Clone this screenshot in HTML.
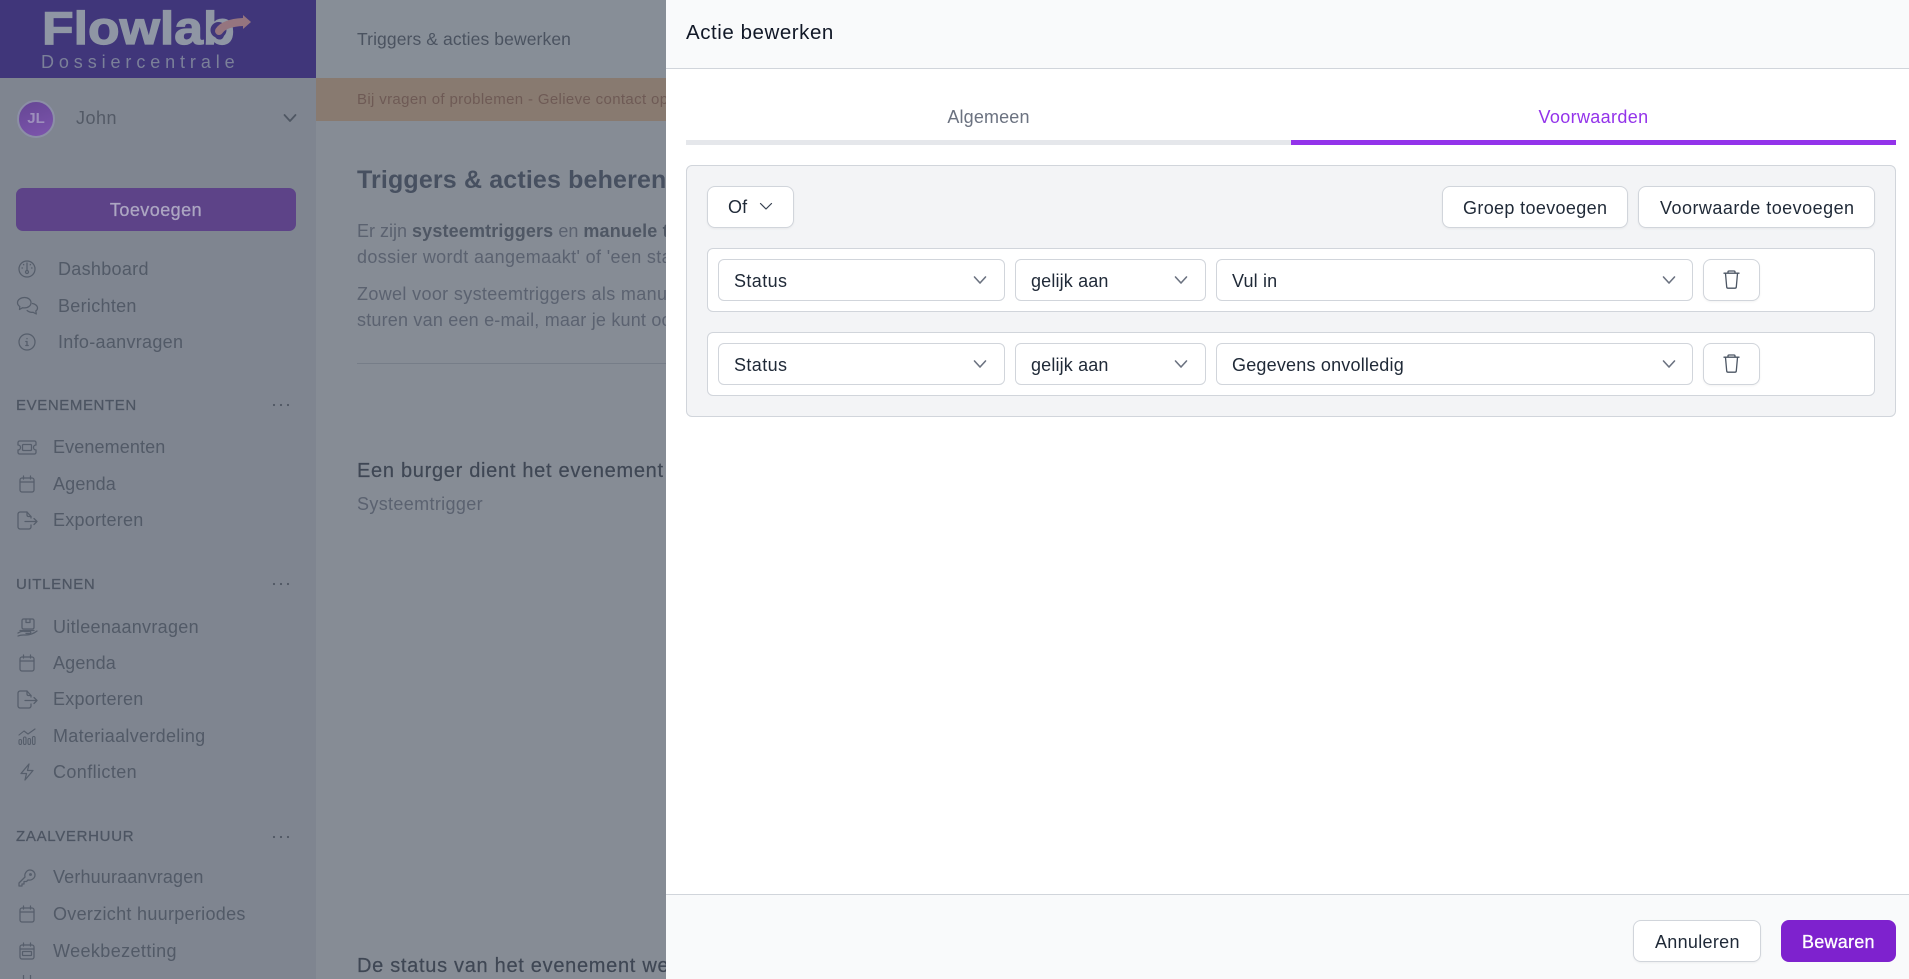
<!DOCTYPE html>
<html lang="nl">
<head>
<meta charset="utf-8">
<title>Actie bewerken</title>
<style>
*{box-sizing:border-box;margin:0;padding:0}
html,body{width:1909px;height:979px;overflow:hidden;background:#868c95;font-family:"Liberation Sans",sans-serif}
.a{position:absolute}
.t{position:absolute;line-height:24px;height:24px;white-space:nowrap;font-size:18px}
.nav{color:#525a67;letter-spacing:.3px}
.sec{color:#4d5562;font-size:15px;letter-spacing:.6px;-webkit-text-stroke:.25px #4d5562}
.ic{position:absolute;fill:none;stroke:#565e6b;stroke-width:1.25;stroke-linecap:round;stroke-linejoin:round}
.dots{position:absolute;width:18px;height:4px;left:272px}
.box{position:absolute;background:#fff;border:1px solid #d1d5db;border-radius:6px}
.btn{position:absolute;background:#fff;border:1px solid #d1d5db;border-radius:8px;box-shadow:0 1px 2px rgba(0,0,0,.05)}
.d{color:#1f2937;letter-spacing:.15px}
.chev{position:absolute;fill:none;stroke:#6b7280;stroke-width:1.6;stroke-linecap:round;stroke-linejoin:round}
.tr{position:absolute;fill:none;stroke:#4b5563;stroke-width:1.3;stroke-linecap:round;stroke-linejoin:round}
.p{font-size:18px;color:#5b6270}
.h{font-size:20px;color:#3f4754;letter-spacing:.7px;-webkit-text-stroke:.2px #3f4754}
</style>
</head>
<body>
<!-- dimmed page -->
<div class="a" style="left:0;top:0;width:316px;height:979px;background:#7f8590"></div>
<div class="a" style="left:316px;top:0;width:350px;height:78px;background:#878e97"></div>
<div class="a" style="left:316px;top:78px;width:350px;height:43px;background:#887a70"></div>
<div class="a" style="left:0;top:0;width:316px;height:78px;background:#40367a"></div>

<!-- logo -->
<div class="t" style="left:42px;top:3px;height:50px;line-height:50px;font-size:46px;font-weight:bold;color:#8f96a4;-webkit-text-stroke:1.2px #8f96a4;transform:scaleX(1.125);transform-origin:left center">Flowlab</div>
<div class="t" style="left:41px;top:50px;font-size:18px;color:#7b8099;letter-spacing:4.9px">Dossiercentrale</div>
<svg class="a" style="left:210px;top:10px" width="46" height="30" viewBox="0 0 46 30"><circle cx="8.500" cy="20" r="8" fill="#40367a"/><path d="M9 21C13 15 22 12.500 33 12" fill="none" stroke="#95757f" stroke-width="8" stroke-linecap="round"/><path d="M33 5L41 12L33 19Z" fill="#95757f"/></svg>

<!-- user -->
<div class="a" style="left:17px;top:100px;width:38px;height:38px;border-radius:50%;background:linear-gradient(160deg,#654694,#7d55ad);border:2px solid #8c8fa6"></div>
<div class="t" style="left:17px;top:107px;width:38px;text-align:center;font-size:15px;font-weight:bold;color:#9d8fbc">JL</div>
<div class="t" style="left:76px;top:106px;color:#535a66;letter-spacing:.5px">John</div>
<svg class="chev" style="left:282px;top:111px;stroke:#4f5763;stroke-width:1.8" width="16" height="14" viewBox="0 0 16 14"><path d="M2.500 4l5.500 6 5.500-6"/></svg>

<!-- add button -->
<div class="a" style="left:16px;top:188px;width:280px;height:43px;background:#5d4388;border-radius:7px"></div>
<div class="t" style="left:16px;top:198px;width:280px;text-align:center;color:#aca6c2;letter-spacing:.45px;-webkit-text-stroke:.3px #aca6c2">Toevoegen</div>

<!-- top nav -->
<svg class="ic" style="left:18px;top:260px" width="18" height="18" viewBox="0 0 18 18"><circle cx="9" cy="9" r="8"/><path d="M9 3v7"/><circle cx="9" cy="12" r="1.500"/><path d="M4 8h.5M13.500 8h.5M5.500 4.500l.3.3M12.500 4.500l-.3.3"/></svg>
<div class="t nav" style="left:58px;top:257px">Dashboard</div>
<svg class="ic" style="left:16px;top:296px" width="23" height="20" viewBox="0 0 23 20"><path d="M8.500 1.500c3.700 0 6.500 2.300 6.500 5.200s-2.800 5.200-6.500 5.200c-.7 0-1.300-.1-1.900-.2L3.500 13.500l.3-3C2.300 9.500 1.500 8.200 1.500 6.700c0-2.900 3.200-5.200 7-5.200z"/><path d="M16.500 7.500c2.800.5 5 2.300 5 4.500 0 1.200-.7 2.300-1.700 3l.5 3-3.200-1.700c-2.300.3-4.500-.5-6-1.800"/></svg>
<div class="t nav" style="left:58px;top:294px">Berichten</div>
<svg class="ic" style="left:18px;top:333px" width="18" height="18" viewBox="0 0 18 18"><circle cx="9" cy="9" r="8"/><path d="M9 8.500v4M9 5.500v.2M7.800 8.500H9M7.800 12.500h2.400"/></svg>
<div class="t nav" style="left:58px;top:330px">Info-aanvragen</div>

<!-- evenementen -->
<div class="t sec" style="left:16px;top:394px">EVENEMENTEN</div>
<svg class="dots" style="top:403px" viewBox="0 0 18 4"><circle cx="2" cy="2" r="1.100" fill="#4f5763"/><circle cx="9" cy="2" r="1.100" fill="#4f5763"/><circle cx="16" cy="2" r="1.100" fill="#4f5763"/></svg>
<svg class="ic" style="left:17px;top:440px" width="20" height="15" viewBox="0 0 20 15"><path d="M2.500 1h15c.8 0 1.500.7 1.500 1.500V5c-1.500 0-2.500 1.100-2.500 2.500S17.500 10 19 10v2.500c0 .8-.7 1.500-1.500 1.500h-15c-.8 0-1.500-.7-1.500-1.500V10c1.500 0 2.500-1.100 2.500-2.500S2.500 5 1 5V2.500C1 1.700 1.700 1 2.500 1z"/><rect x="5.500" y="4.500" width="9" height="6" rx="1"/></svg>
<div class="t nav" style="left:53px;top:435px;letter-spacing:.12px">Evenementen</div>
<svg class="ic" style="left:19px;top:475px" width="16" height="18" viewBox="0 0 16 18"><rect x="1" y="3" width="14" height="14" rx="2"/><path d="M1 7h14M4.500 1v3M11.500 1v3"/></svg>
<div class="t nav" style="left:53px;top:472px;letter-spacing:.15px">Agenda</div>
<svg class="ic" style="left:17px;top:511px" width="21" height="19" viewBox="0 0 21 19"><path d="M14 7V5.500L10 1H3C2 1 1 2 1 3v13c0 1 1 2 2 2h9c1 0 2-1 2-2v-2"/><path d="M10 1v3c0 1 .5 1.500 1.500 1.500H14M8 10.500h12M17 7.500l3 3-3 3"/></svg>
<div class="t nav" style="left:53px;top:508px;letter-spacing:.25px">Exporteren</div>

<!-- uitlenen -->
<div class="t sec" style="left:16px;top:573px;letter-spacing:.65px">UITLENEN</div>
<svg class="dots" style="top:582px" viewBox="0 0 18 4"><circle cx="2" cy="2" r="1.100" fill="#4f5763"/><circle cx="9" cy="2" r="1.100" fill="#4f5763"/><circle cx="16" cy="2" r="1.100" fill="#4f5763"/></svg>
<svg class="ic" style="left:17px;top:618px" width="21" height="19" viewBox="0 0 21 19"><rect x="5" y="1" width="12" height="10" rx="1.500"/><path d="M9 1v3.500h4V1M3 12.500h14M1 15c3-2 5-2 7-1.500h5c1 0 1 2 0 2H9M1 18c3-1.500 5-1 8-1 4 0 7-1 11-4"/></svg>
<div class="t nav" style="left:53px;top:615px">Uitleenaanvragen</div>
<svg class="ic" style="left:19px;top:654px" width="16" height="18" viewBox="0 0 16 18"><rect x="1" y="3" width="14" height="14" rx="2"/><path d="M1 7h14M4.500 1v3M11.500 1v3"/></svg>
<div class="t nav" style="left:53px;top:651px;letter-spacing:.15px">Agenda</div>
<svg class="ic" style="left:17px;top:690px" width="21" height="19" viewBox="0 0 21 19"><path d="M14 7V5.500L10 1H3C2 1 1 2 1 3v13c0 1 1 2 2 2h9c1 0 2-1 2-2v-2"/><path d="M10 1v3c0 1 .5 1.500 1.500 1.500H14M8 10.500h12M17 7.500l3 3-3 3"/></svg>
<div class="t nav" style="left:53px;top:687px;letter-spacing:.25px">Exporteren</div>
<svg class="ic" style="left:18px;top:728px;stroke-width:1.1" width="18" height="17" viewBox="0 0 18 17"><path d="M1 7l5-4 4 3 7-5"/><rect x="1" y="11.500" width="2.500" height="5" rx="1.200"/><rect x="5.500" y="9" width="2.500" height="7.500" rx="1.200"/><rect x="10" y="10.500" width="2.500" height="6" rx="1.200"/><rect x="14.500" y="8.500" width="2.500" height="8" rx="1.200"/></svg>
<div class="t nav" style="left:53px;top:724px">Materiaalverdeling</div>
<svg class="ic" style="left:20px;top:763px" width="14" height="18" viewBox="0 0 14 18"><path d="M9 1L1 10.500h5.500L5 17l8-9.500H7.500z"/></svg>
<div class="t nav" style="left:53px;top:760px;letter-spacing:.4px">Conflicten</div>

<!-- zaalverhuur -->
<div class="t sec" style="left:16px;top:825px;letter-spacing:.7px">ZAALVERHUUR</div>
<svg class="dots" style="top:835px" viewBox="0 0 18 4"><circle cx="2" cy="2" r="1.100" fill="#4f5763"/><circle cx="9" cy="2" r="1.100" fill="#4f5763"/><circle cx="16" cy="2" r="1.100" fill="#4f5763"/></svg>
<svg class="ic" style="left:18px;top:869px" width="18" height="18" viewBox="0 0 18 18"><path d="M1 17v-3l6-6c-.8-3 1.500-7 5-7 2.800 0 5 2.200 5 5 0 3.500-4 5.800-7 5l-1.500 1.500H6V15H4v2z"/><circle cx="12.500" cy="5.500" r=".8"/></svg>
<div class="t nav" style="left:53px;top:865px;letter-spacing:.15px">Verhuuraanvragen</div>
<svg class="ic" style="left:19px;top:905px" width="16" height="18" viewBox="0 0 16 18"><rect x="1" y="3" width="14" height="14" rx="2"/><path d="M1 7h14M4.500 1v3M11.500 1v3"/></svg>
<div class="t nav" style="left:53px;top:902px">Overzicht huurperiodes</div>
<svg class="ic" style="left:19px;top:942px" width="16" height="18" viewBox="0 0 16 18"><rect x="1" y="3" width="14" height="14" rx="2"/><path d="M1 7h14M4.500 1v3M11.500 1v3"/><rect x="3.500" y="9.500" width="9" height="4" rx=".5"/></svg>
<div class="t nav" style="left:53px;top:939px;letter-spacing:.4px">Weekbezetting</div>
<svg class="ic" style="left:19px;top:975px" width="16" height="4" viewBox="0 0 16 4"><path d="M4.500 0v4M11.500 0v4"/></svg>

<!-- main content -->
<div style="position:absolute;left:316px;top:0;width:350px;height:979px;overflow:hidden">
<div class="t" style="left:41px;top:27px;font-size:17.500px;color:#4b5360;letter-spacing:.1px">Triggers &amp; acties bewerken</div>
<div class="t" style="left:41px;top:88px;font-size:15px;color:#6e5a55;letter-spacing:.35px">Bij vragen of problemen - Gelieve contact op</div>
<div class="t" style="left:41px;top:168px;font-size:25px;font-weight:bold;color:#475060;letter-spacing:.15px">Triggers &amp; acties beheren</div>
<div class="t p" style="left:41px;top:219px">Er zijn <b style="color:#4f5764;letter-spacing:.15px">systeemtriggers</b> en <b style="color:#4f5764;letter-spacing:.15px">manuele triggers</b></div>
<div class="t p" style="left:41px;top:245px;letter-spacing:.35px">dossier wordt aangemaakt' of 'een status</div>
<div class="t p" style="left:41px;top:282px;letter-spacing:.35px">Zowel voor systeemtriggers als manuele</div>
<div class="t p" style="left:41px;top:308px;letter-spacing:.2px">sturen van een e-mail, maar je kunt ook</div>
<div class="a" style="left:41px;top:363px;width:309px;height:1px;background:#767d88"></div>
<div class="t h" style="left:41px;top:459px">Een burger dient het evenement</div>
<div class="t p" style="left:41px;top:492px;letter-spacing:.35px">Systeemtrigger</div>
<div class="t h" style="left:41px;top:954px">De status van het evenement werd</div>
</div>

<!-- slide-over panel -->
<div class="a" style="left:666px;top:0;width:1243px;height:979px;background:#fff"></div>
<div class="a" style="left:666px;top:0;width:1243px;height:69px;background:#f9fafb;border-bottom:1px solid #d1d5db"></div>
<div class="t" style="left:686px;top:21px;font-size:20.500px;color:#111827;letter-spacing:.55px">Actie bewerken</div>

<!-- tabs -->
<div class="t" style="left:686px;top:105px;width:605px;text-align:center;color:#6b7280;letter-spacing:.15px">Algemeen</div>
<div class="t" style="left:1291px;top:105px;width:605px;text-align:center;color:#9333ea;letter-spacing:.35px">Voorwaarden</div>
<div class="a" style="left:686px;top:140px;width:605px;height:5px;background:#e5e7eb"></div>
<div class="a" style="left:1291px;top:140px;width:605px;height:5px;background:#9333ea"></div>

<!-- conditions -->
<div class="a" style="left:686px;top:165px;width:1210px;height:252px;background:#f3f4f6;border:1px solid #d1d5db;border-radius:6px"></div>

<div class="btn" style="left:707px;top:186px;width:87px;height:42px"></div>
<div class="t d" style="left:728px;top:195px">Of</div>
<svg class="chev" style="left:758px;top:200px;stroke:#374151;stroke-width:1.200" width="16" height="14" viewBox="0 0 16 14"><path d="M2.500 3.500l5.500 5.500 5.500-5.500"/></svg>

<div class="btn" style="left:1442px;top:186px;width:186px;height:42px"></div>
<div class="t d" style="left:1463px;top:196px;letter-spacing:.35px">Groep toevoegen</div>
<div class="btn" style="left:1638px;top:186px;width:237px;height:42px"></div>
<div class="t d" style="left:1660px;top:196px;letter-spacing:.47px">Voorwaarde toevoegen</div>

<!-- row 1 -->
<div class="box" style="left:707px;top:248px;width:1168px;height:64px"></div>
<div class="box" style="left:718px;top:259px;width:287px;height:42px"></div>
<div class="t d" style="left:734px;top:269px;letter-spacing:.4px">Status</div>
<svg class="chev" style="left:972px;top:273px" width="16" height="14" viewBox="0 0 16 14"><path d="M2.500 4l5.500 6 5.500-6"/></svg>
<div class="box" style="left:1015px;top:259px;width:191px;height:42px"></div>
<div class="t d" style="left:1031px;top:269px;letter-spacing:.15px">gelijk aan</div>
<svg class="chev" style="left:1173px;top:273px" width="16" height="14" viewBox="0 0 16 14"><path d="M2.500 4l5.500 6 5.500-6"/></svg>
<div class="box" style="left:1216px;top:259px;width:477px;height:42px"></div>
<div class="t d" style="left:1232px;top:269px">Vul in</div>
<svg class="chev" style="left:1661px;top:273px" width="16" height="14" viewBox="0 0 16 14"><path d="M2.500 4l5.500 6 5.500-6"/></svg>
<div class="btn" style="left:1703px;top:259px;width:57px;height:42px"></div>
<svg class="tr" style="left:1722px;top:270px" width="20" height="20" viewBox="0 0 20 20"><path d="M2 3.200h15M6 3V2c0-.5.4-1 1-1h5c.6 0 1 .5 1 1v1M3.500 3.500l1.200 13.500c.1.800.6 1.200 1.300 1.200h7c.7 0 1.200-.4 1.300-1.200l1.200-13.500"/></svg>

<!-- row 2 -->
<div class="box" style="left:707px;top:332px;width:1168px;height:64px"></div>
<div class="box" style="left:718px;top:343px;width:287px;height:42px"></div>
<div class="t d" style="left:734px;top:353px;letter-spacing:.4px">Status</div>
<svg class="chev" style="left:972px;top:357px" width="16" height="14" viewBox="0 0 16 14"><path d="M2.500 4l5.500 6 5.500-6"/></svg>
<div class="box" style="left:1015px;top:343px;width:191px;height:42px"></div>
<div class="t d" style="left:1031px;top:353px;letter-spacing:.15px">gelijk aan</div>
<svg class="chev" style="left:1173px;top:357px" width="16" height="14" viewBox="0 0 16 14"><path d="M2.500 4l5.500 6 5.500-6"/></svg>
<div class="box" style="left:1216px;top:343px;width:477px;height:42px"></div>
<div class="t d" style="left:1232px;top:353px;letter-spacing:.2px">Gegevens onvolledig</div>
<svg class="chev" style="left:1661px;top:357px" width="16" height="14" viewBox="0 0 16 14"><path d="M2.500 4l5.500 6 5.500-6"/></svg>
<div class="btn" style="left:1703px;top:343px;width:57px;height:42px"></div>
<svg class="tr" style="left:1722px;top:354px" width="20" height="20" viewBox="0 0 20 20"><path d="M2 3.200h15M6 3V2c0-.5.4-1 1-1h5c.6 0 1 .5 1 1v1M3.500 3.500l1.200 13.500c.1.800.6 1.200 1.300 1.200h7c.7 0 1.200-.4 1.300-1.200l1.200-13.500"/></svg>

<!-- footer -->
<div class="a" style="left:666px;top:894px;width:1243px;height:85px;background:#f9fafb;border-top:1px solid #d1d5db"></div>
<div class="btn" style="left:1633px;top:920px;width:128px;height:42px"></div>
<div class="t d" style="left:1655px;top:930px;letter-spacing:.3px">Annuleren</div>
<div class="a" style="left:1781px;top:920px;width:115px;height:42px;background:#7e22ce;border-radius:8px"></div>
<div class="t" style="left:1802px;top:930px;color:#fff;letter-spacing:.25px;-webkit-text-stroke:.3px #fff">Bewaren</div>
</body>
</html>
